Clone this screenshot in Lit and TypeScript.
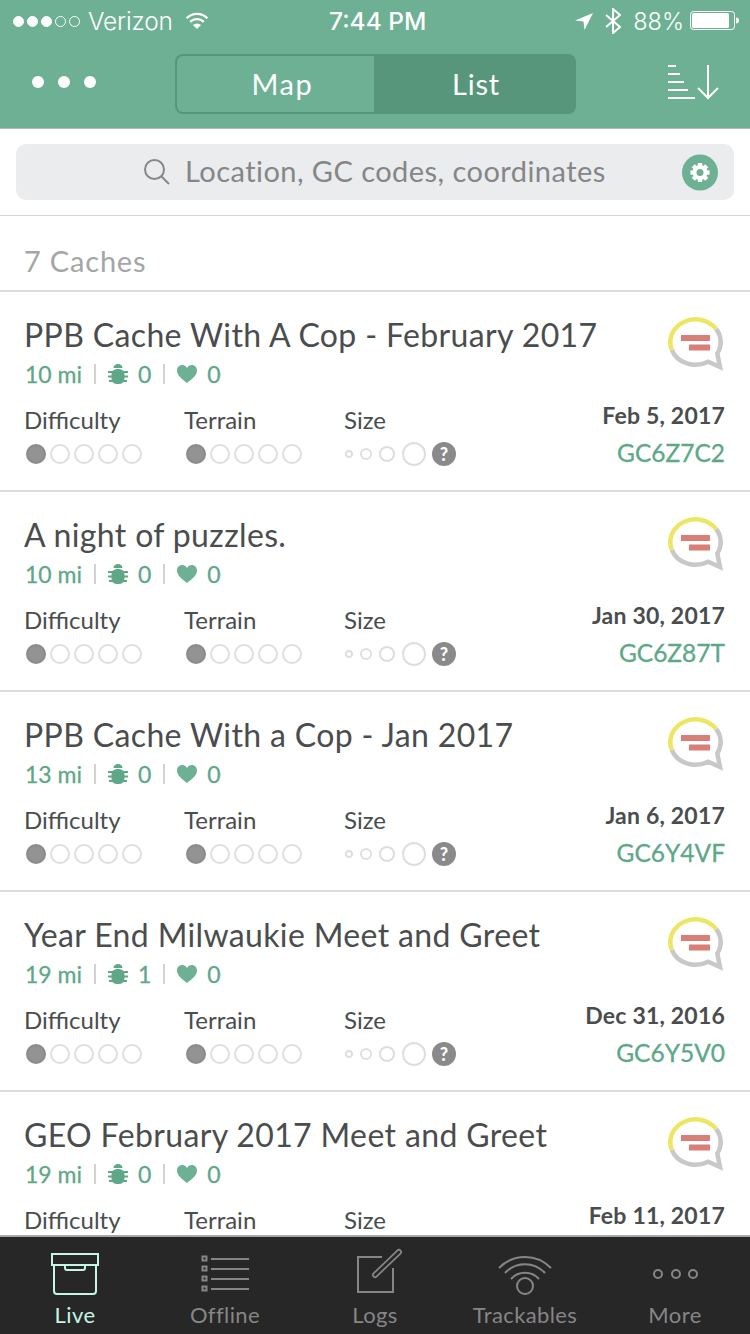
import { LitElement, html, css, svg } from "lit";
import { customElement } from "lit/decorators.js";

// the last row runs under the tab bar, only its title, meta, labels and date show
const caches = [
  { title: "PPB Cache With A Cop - February 2017", dist: "10 mi", bugs: 0, favs: 0, date: "Feb 5, 2017", code: "GC6Z7C2" },
  { title: "A night of puzzles.", dist: "10 mi", bugs: 0, favs: 0, date: "Jan 30, 2017", code: "GC6Z87T" },
  { title: "PPB Cache With a Cop - Jan 2017", dist: "13 mi", bugs: 0, favs: 0, date: "Jan 6, 2017", code: "GC6Y4VF" },
  { title: "Year End Milwaukie Meet and Greet", dist: "19 mi", bugs: 1, favs: 0, date: "Dec 31, 2016", code: "GC6Y5V0" },
  { title: "GEO February 2017 Meet and Greet", dist: "19 mi", bugs: 0, favs: 0, date: "Feb 11, 2017", code: "" },
];

const sizes = [8, 12, 16, 24];

const bug = html`<svg class="bug" viewBox="0 0 20 20" width="20" height="20" fill="#5ea888">
  <path d="M5.500 4a4.500 4 0 0 1 9 0z" />
  <rect x="3.500" y="5" width="13" height="15" rx="5.500" />
  <path d="M0 7h20v2H0zM0 11.500h20v2H0zM1 16h18v2H1z" />
</svg>`;

const heart = html`<svg class="heart" viewBox="0 0 20 18" width="20" height="18">
  <path fill="#6eb094" d="M10 18C4 13 0 10 0 5.400 0 2.200 2.400 0 5.200 0 7.200 0 9 1 10 3c1-2 2.800-3 4.800-3C17.600 0 20 2.200 20 5.400 20 10 16 13 10 18z" />
</svg>`;

const bubble = html`<svg class="bubble" viewBox="0 0 56 54" width="56" height="54">
  <path d="M3.800 32.800A25.200 22.700 0 0 0 40.100 44.700L52 50 49.300 36.400A25.200 22.700 0 0 0 48.100 12" fill="none" stroke="#c8c8c8" stroke-width="4.500" />
  <path d="M48.100 12A25.200 22.700 0 0 0 3.800 32.800" fill="none" stroke="#ebe765" stroke-width="4.500" />
  <rect x="13" y="18" width="29" height="6" fill="#da7f78" />
  <rect x="21" y="27.500" width="21" height="6" fill="#da7f78" />
</svg>`;

const gearTeeth = [0, 45, 90, 135, 180, 225, 270, 315].map(
  (a) => svg`<rect x="-2.200" y="-9.500" width="4.400" height="5" fill="#fff" transform="rotate(${a})" />`
);

@customElement("app-root")
export class AppRoot extends LitElement {
  static styles = css`
    * {
      margin: 0;
      padding: 0;
      box-sizing: border-box;
    }

    :host {
      display: flex;
      flex-direction: column;
      height: 1334px;
      overflow: hidden;
      background: #fff;
      font-family: Lato, "Open Sans", sans-serif;
      color: #4a4d4d;
    }

    svg {
      display: block;
      flex: none;
    }

    .header {
      background: #6eb094;
      border-bottom: 1px solid #b5b9b7;
      color: #fff;
      flex: none;
    }

    .status {
      height: 40px;
      display: flex;
      align-items: center;
      justify-content: space-between;
      padding: 2px 11px 0 13px;
      font-family: Inter, sans-serif;
      font-size: 24.5px;
      font-weight: 300;
      position: relative;
    }

    .status-left,
    .status-right {
      display: flex;
      align-items: center;
    }

    .signal {
      display: flex;
      gap: 3px;
      margin-right: 8px;
    }

    .signal i {
      width: 11px;
      height: 11px;
      border-radius: 50%;
      border: 1px solid #fff;
    }

    .signal i.on {
      background: #fff;
    }

    .carrier {
      margin-right: 12px;
      letter-spacing: -0.2px;
    }

    .time {
      position: absolute;
      left: 329px;
      font-weight: 500;
    }

    .percent {
      margin: 0 6px 0 12px;
      font-size: 23.5px;
    }

    .bt {
      margin-left: 12px;
    }

    .nav {
      height: 88px;
      display: flex;
      align-items: flex-start;
      padding-top: 14px;
    }

    .dots {
      width: 175px;
      height: 60px;
      display: flex;
      align-items: center;
      gap: 14px;
      padding: 0 0 4px 32px;
    }

    .dots i {
      width: 12px;
      height: 12px;
      border-radius: 50%;
      background: #fff;
    }

    .segment {
      width: 401px;
      height: 60px;
      display: flex;
      font-size: 29px;
      letter-spacing: 0.8px;
    }

    .segment div {
      display: flex;
      align-items: center;
      justify-content: center;
      padding-bottom: 2px;
    }

    .seg-map {
      width: 199px;
      border: 2px solid #57967b;
      border-right: 0;
      border-radius: 8px 0 0 8px;
      padding-left: 14px;
      letter-spacing: 1.6px;
    }

    .seg-list {
      width: 202px;
      background: #57967b;
      border-radius: 0 8px 8px 0;
      padding-left: 2px;
    }

    .sort {
      margin: 11px 0 0 92px;
    }

    .search-wrap {
      flex: none;
      height: 87px;
      padding: 15px 16px 0;
      border-bottom: 1px solid #d4d4d4;
    }

    .search {
      height: 56px;
      background: #ebecee;
      border-radius: 10px;
      display: flex;
      align-items: center;
      padding: 0 16px 0 127px;
      font-size: 29px;
      letter-spacing: 0.45px;
      color: #848687;
    }

    .search .mag {
      margin-right: 14px;
    }

    .search span {
      flex: 1;
      white-space: nowrap;
      padding-bottom: 4px;
    }

    .count {
      flex: none;
      height: 76px;
      padding: 26px 24px 0;
      font-size: 29px;
      letter-spacing: 0.8px;
      line-height: 38px;
      color: #a4a6a6;
      border-bottom: 2px solid #dcdcdc;
    }

    .list {
      flex: 1;
      min-height: 0;
      overflow: hidden;
    }

    .row {
      height: 200px;
      padding: 23px 25px 0 24px;
      border-bottom: 2px solid #dcdcdc;
    }

    .row-top {
      display: flex;
      justify-content: space-between;
    }

    .title {
      font-size: 32px;
      letter-spacing: 0.36px;
      line-height: 40px;
      white-space: nowrap;
    }

    .meta {
      display: flex;
      align-items: center;
      height: 30px;
      font-size: 23px;
      -webkit-text-stroke: 0.3px #5ea888;
      color: #5ea888;
      margin: 4px 0 0 1px;
    }

    .meta .sep {
      width: 2px;
      height: 20px;
      background: #d2d2d2;
      margin: 0 12px;
    }

    .meta .bug,
    .meta .heart {
      margin-right: 10px;
    }

    .bubble {
      margin: 2px 1px 0 0;
    }

    .row-bottom {
      display: flex;
      margin-top: 15px;
    }

    .rating {
      width: 160px;
    }

    .rating label {
      display: block;
      font-size: 24px;
      line-height: 32px;
    }

    .circles {
      display: flex;
      align-items: center;
      gap: 4px;
      height: 24px;
      margin-top: 6px;
      padding-left: 2px;
    }

    .circles i {
      width: 20px;
      height: 20px;
      border-radius: 50%;
      border: 2px solid #dedede;
      flex: none;
    }

    .circles i.on {
      background: #939393;
      border-color: #8a8a8a;
    }

    .sizes {
      gap: 7px;
      padding-left: 1px;
    }

    .unknown {
      width: 24px;
      height: 24px;
      margin-left: -1px;
      border-radius: 50%;
      background: #8a8a8a;
      color: #fff;
      font-size: 18px;
      font-weight: 900;
      display: flex;
      align-items: center;
      justify-content: center;
    }

    .side {
      flex: 1;
      text-align: right;
      margin-top: -4px;
    }

    .date {
      font-size: 23px;
      font-weight: 700;
      letter-spacing: 0.2px;
      line-height: 30px;
    }

    .code {
      font-size: 24.5px;
      -webkit-text-stroke: 0.3px #5ea888;
      line-height: 32px;
      margin-top: 7px;
      color: #5ea888;
    }

    .tabs {
      flex: none;
      height: 99px;
      background: #272727;
      border-top: 2px solid #a8a8a8;
      padding-top: 14px;
      display: flex;
      color: #868686;
    }

    .tab {
      flex: 1;
      display: flex;
      flex-direction: column;
      align-items: center;
      font-size: 22px;
      letter-spacing: 0.4px;
    }

    .tab.active {
      color: #c6f5e4;
    }

    .tab .icon {
      height: 46px;
      display: flex;
      align-items: center;
    }

    .tab .logs {
      margin: 0 0 6px 8px;
    }

    .tab span {
      line-height: 30px;
      margin-top: 3px;
    }
  `;

  renderCircles() {
    return html`<div class="circles">
      <i class="on"></i><i></i><i></i><i></i><i></i>
    </div>`;
  }

  renderSizes() {
    return html`<div class="circles sizes">
      ${sizes.map((d) => html`<i style="width:${d}px;height:${d}px"></i>`)}
      <div class="unknown">?</div>
    </div>`;
  }

  renderRow(c: (typeof caches)[number]) {
    return html`<div class="row">
      <div class="row-top">
        <div>
          <div class="title">${c.title}</div>
          <div class="meta">
            ${c.dist}<span class="sep"></span>${bug}${c.bugs}<span class="sep"></span>${heart}${c.favs}
          </div>
        </div>
        ${bubble}
      </div>
      <div class="row-bottom">
        <div class="rating"><label>Difficulty</label>${c.code ? this.renderCircles() : ""}</div>
        <div class="rating"><label>Terrain</label>${c.code ? this.renderCircles() : ""}</div>
        <div class="rating"><label>Size</label>${c.code ? this.renderSizes() : ""}</div>
        <div class="side">
          <div class="date">${c.date}</div>
          ${c.code ? html`<div class="code">${c.code}</div>` : ""}
        </div>
      </div>
    </div>`;
  }

  render() {
    return html`
      <div class="header">
        <div class="status">
          <div class="status-left">
            <div class="signal"><i class="on"></i><i class="on"></i><i class="on"></i><i></i><i></i></div>
            <span class="carrier">Verizon</span>
            <svg viewBox="0 0 26 20" width="24" height="18" fill="none" stroke="#fff" stroke-width="2.600">
              <path d="M1.500 7a16 16 0 0 1 23 0M5.500 11a10.500 10.500 0 0 1 15 0" />
              <path d="M13 19l-4.500-4.500a6.500 6.500 0 0 1 9 0z" fill="#fff" stroke="none" />
            </svg>
          </div>
          <span class="time">7:44 PM</span>
          <div class="status-right">
            <svg viewBox="0 0 18 18" width="18" height="18"><path fill="#fff" d="M18 1L9.500 18 8.500 9.500 0 8.500z" /></svg>
            <svg class="bt" viewBox="0 0 16 26" width="16" height="26" fill="none" stroke="#fff" stroke-width="2">
              <path d="M1 7L15 19 8 25V1l7 6L1 19" />
            </svg>
            <span class="percent">88%</span>
            <svg viewBox="0 0 49 20" width="49" height="20">
              <rect x=".5" y=".5" width="44" height="18" rx="3" fill="none" stroke="#fff" />
              <rect x="2" y="2" width="37" height="15" rx="1.500" fill="#fff" />
              <path d="M46 6.500c2 0 3 1 3 3s-1 3-3 3z" fill="#fff" />
            </svg>
          </div>
        </div>
        <div class="nav">
          <div class="dots"><i></i><i></i><i></i></div>
          <div class="segment">
            <div class="seg-map">Map</div>
            <div class="seg-list">List</div>
          </div>
          <svg class="sort" viewBox="0 0 52 36" width="52" height="36" fill="none" stroke="#fff" stroke-width="2">
            <path d="M0 1h8M0 9h12M0 17h16M0 25h20M0 33h27M40 0v34M30 23l10 10 10-10" />
          </svg>
        </div>
      </div>

      <div class="search-wrap">
        <div class="search">
          <svg class="mag" viewBox="0 0 28 28" width="28" height="28" fill="none" stroke="#868889" stroke-width="2">
            <circle cx="11.500" cy="11.500" r="9.500" /><path d="M18 18l8 8" />
          </svg>
          <span>Location, GC codes, coordinates</span>
          <svg viewBox="0 0 36 37" width="36" height="37">
            <circle cx="18" cy="18.500" r="18" fill="#6eb094" />
            <g transform="translate(18 18.500)">
              ${gearTeeth}
              <circle r="7.500" fill="#fff" />
              <circle r="3.500" fill="#6eb094" />
            </g>
          </svg>
        </div>
      </div>

      <div class="count">7 Caches</div>

      <div class="list">${caches.map((c) => this.renderRow(c))}</div>

      <div class="tabs">
        <div class="tab active">
          <div class="icon">
            <svg viewBox="0 0 48 42" width="48" height="42" fill="none" stroke="#c6f5e4" stroke-width="2">
              <path d="M1 1h46v11H1zM3 12v26q0 3 3 3h36q3 0 3-3V12M14 12v3q0 2 2 2h16q2 0 2-2v-3" />
            </svg>
          </div>
          <span>Live</span>
        </div>
        <div class="tab">
          <div class="icon">
            <svg viewBox="0 0 48 38" width="48" height="38" fill="none" stroke="#868686" stroke-width="2">
              <path d="M10 4h38M10 14h38M10 24h38M10 34h38" />
              <path d="M1.500 1.500h4v4h-4zM1.500 11.500h4v4h-4zM1.500 21.500h4v4h-4zM1.500 31.500h4v4h-4z" />
            </svg>
          </div>
          <span>Offline</span>
        </div>
        <div class="tab">
          <div class="icon">
            <svg class="logs" viewBox="0 0 48 48" width="48" height="48" fill="none" stroke="#868686" stroke-width="2">
              <path d="M27 10H3v35h35V21" />
              <path d="M20 28L44 5" stroke-width="6" stroke-linecap="round" />
              <path d="M20 28L44 5" stroke="#272727" stroke-width="2.500" stroke-linecap="round" />
            </svg>
          </div>
          <span>Logs</span>
        </div>
        <div class="tab">
          <div class="icon">
            <svg viewBox="0 0 54 42" width="54" height="42" fill="none" stroke="#868686" stroke-width="2">
              <path d="M1 15a36 36 0 0 1 52 0M7 20a27 27 0 0 1 40 0M13 26a19 19 0 0 1 28 0" />
              <circle cx="27" cy="33" r="8" />
            </svg>
          </div>
          <span>Trackables</span>
        </div>
        <div class="tab">
          <div class="icon">
            <svg viewBox="0 0 46 12" width="46" height="12" fill="none" stroke="#868686" stroke-width="2">
              <circle cx="6" cy="6" r="4" /><circle cx="24" cy="6" r="4" /><circle cx="41" cy="6" r="4" />
            </svg>
          </div>
          <span>More</span>
        </div>
      </div>
    `;
  }
}
